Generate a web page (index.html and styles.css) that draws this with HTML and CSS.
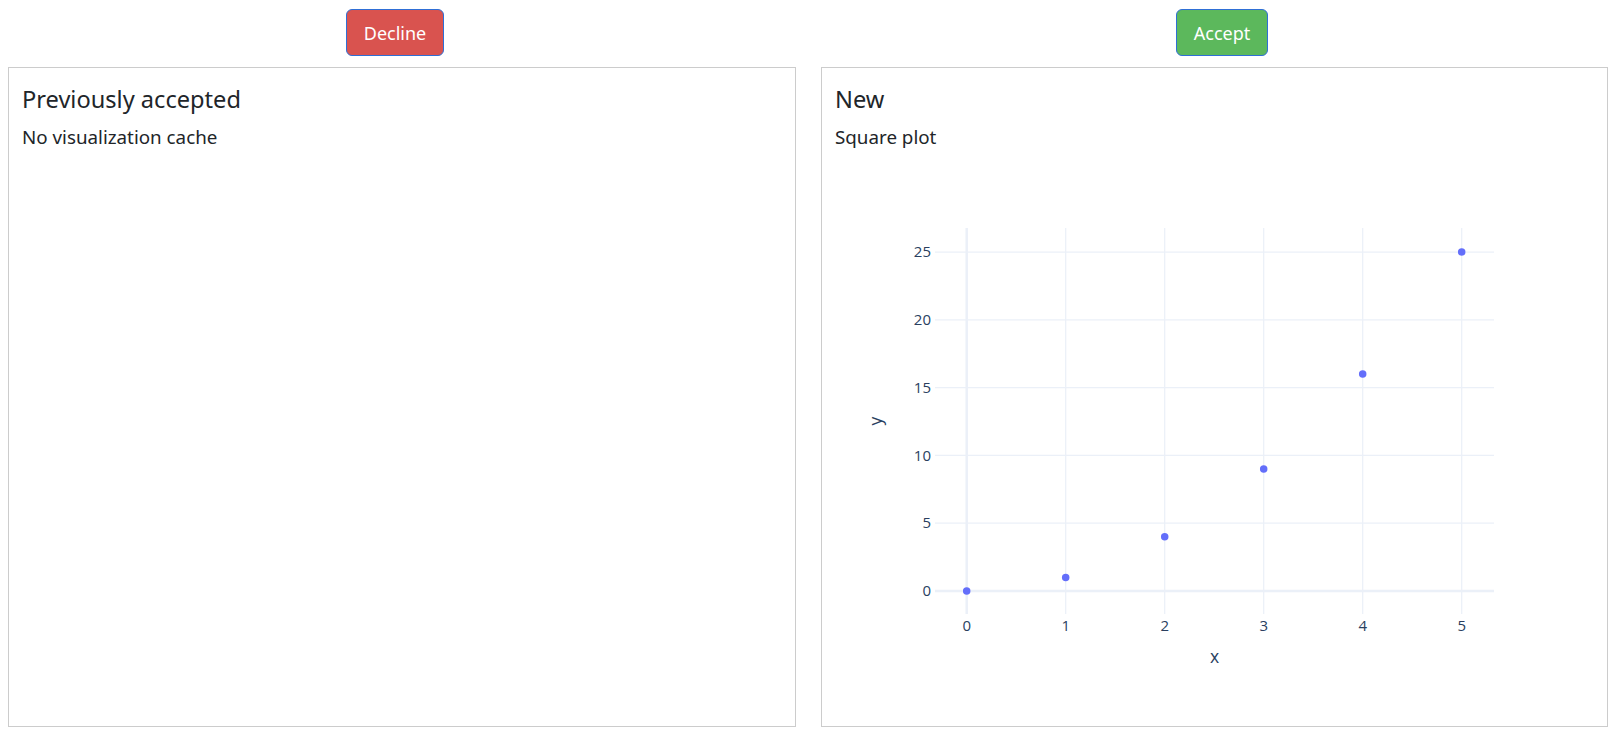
FILE: index.html
```html
<!DOCTYPE html>
<html>
<head>
<meta charset="utf-8">
<link rel="stylesheet" href="styles.css">
</head>
<body>
<div class="actions">
  <div class="action-cell"><button class="btn btn-decline">Decline</button></div>
  <div class="action-cell"><button class="btn btn-accept">Accept</button></div>
</div>
<div class="panels">
  <section class="panel">
    <h2 class="panel-title">Previously accepted</h2>
    <p class="panel-sub">No visualization cache</p>
  </section>
  <section class="panel">
    <h2 class="panel-title">New</h2>
    <p class="panel-sub">Square plot</p>
    <svg class="plot" width="760" height="540" viewBox="0 0 760 540">
      <g class="grid">
        <line x1="230.7" y1="67" x2="230.7" y2="453"/>
        <line x1="329.7" y1="67" x2="329.7" y2="453"/>
        <line x1="428.7" y1="67" x2="428.7" y2="453"/>
        <line x1="527.7" y1="67" x2="527.7" y2="453"/>
        <line x1="626.7" y1="67" x2="626.7" y2="453"/>
        <line x1="100" y1="362.2" x2="659" y2="362.2"/>
        <line x1="100" y1="294.4" x2="659" y2="294.4"/>
        <line x1="100" y1="226.6" x2="659" y2="226.6"/>
        <line x1="100" y1="158.8" x2="659" y2="158.8"/>
        <line x1="100" y1="91" x2="659" y2="91"/>
      </g>
      <g class="zero">
        <line x1="131.7" y1="67" x2="131.7" y2="453"/>
        <line x1="100" y1="430" x2="659" y2="430"/>
      </g>
      <g class="pts">
        <circle cx="131.7" cy="430" r="3.75"/>
        <circle cx="230.7" cy="416.44" r="3.75"/>
        <circle cx="329.7" cy="375.76" r="3.75"/>
        <circle cx="428.7" cy="307.96" r="3.75"/>
        <circle cx="527.7" cy="213.04" r="3.75"/>
        <circle cx="626.7" cy="91" r="3.75"/>
      </g>
      <g class="ytick">
        <text x="96" y="435.25">0</text>
        <text x="96" y="367.45">5</text>
        <text x="96" y="299.65">10</text>
        <text x="96" y="231.85">15</text>
        <text x="96" y="164.05">20</text>
        <text x="96" y="96.25">25</text>
      </g>
      <g class="xtick">
        <text x="131.7" y="470">0</text>
        <text x="230.7" y="470">1</text>
        <text x="329.7" y="470">2</text>
        <text x="428.7" y="470">3</text>
        <text x="527.7" y="470">4</text>
        <text x="626.7" y="470">5</text>
      </g>
      <text class="axis-title" x="379.5" y="501.7">x</text>
      <text class="axis-title" x="0" y="0" transform="translate(47.4 260) rotate(-90)">y</text>
    </svg>
  </section>
</div>
</body>
</html>
```
FILE: styles.css
```css
html, body {
  background: #ffffff;
}
body {
  margin: 8px;
  font-family: "Noto Sans", "Open Sans", sans-serif;
  color: #212529;
}
.actions {
  display: grid;
  grid-template-columns: 774px 774px;
  column-gap: 53px;
  padding-top: 1px;
  margin-bottom: 11px;
}
.action-cell {
  display: flex;
  justify-content: center;
}
.btn {
  height: 47px;
  padding: 0 17px;
  font-family: "Noto Sans", "Open Sans", sans-serif;
  font-size: 18px;
  color: #ffffff;
  border: 1px solid #2f6fd6;
  border-radius: 6px;
}
.btn-decline {
  background: #d9534f;
}
.btn-accept {
  background: #5cb85c;
}
.panels {
  display: grid;
  grid-template-columns: 788px 787px;
  column-gap: 25px;
}
.panel {
  box-sizing: border-box;
  height: 660px;
  border: 1px solid #cccccc;
  padding: 0 13px;
}
.panel-title {
  font-size: 23.6px;
  font-weight: 400;
  line-height: 28px;
  margin: 17px 0 12px;
}
.panel-sub {
  font-size: 18.8px;
  line-height: 24px;
  margin: 0;
}
.plot {
  display: block;
  margin-top: 12px;
  font-family: "Open Sans", sans-serif;
}
.grid line {
  stroke: #ebf0f8;
  stroke-width: 1.25;
}
.zero line {
  stroke: #ebf0f8;
  stroke-width: 2.5;
}
.pts circle {
  fill: #636efa;
}
.ytick text {
  font-size: 15px;
  fill: #2a3f5f;
  text-anchor: end;
}
.xtick text {
  font-size: 15px;
  fill: #2a3f5f;
  text-anchor: middle;
}
.axis-title {
  font-size: 17.5px;
  fill: #2a3f5f;
  text-anchor: middle;
}
```
